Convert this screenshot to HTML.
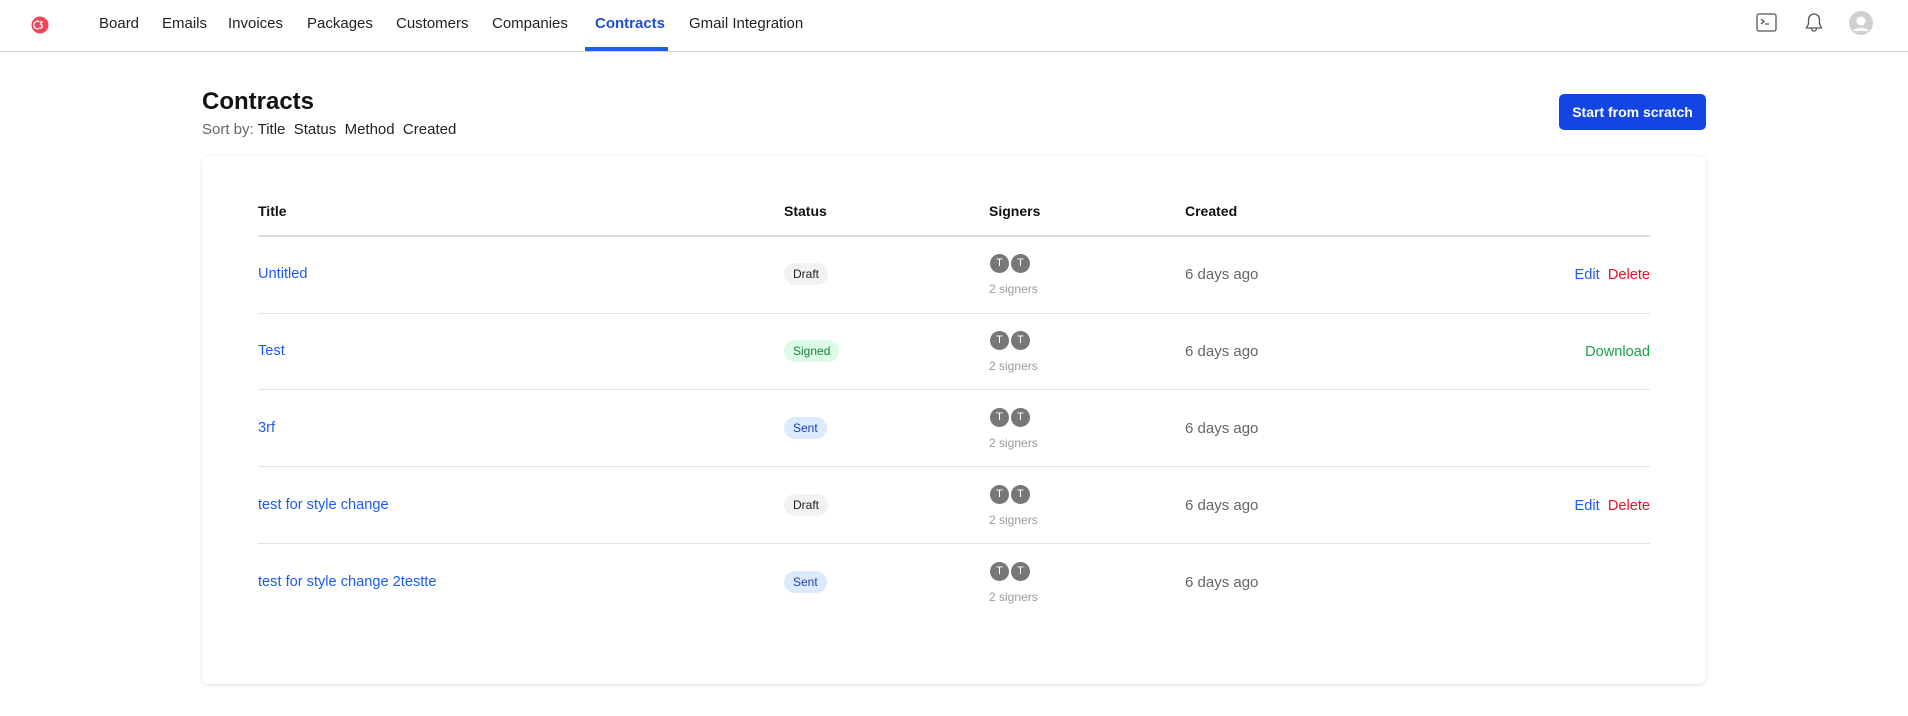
<!DOCTYPE html>
<html><head><meta charset="utf-8"><style>
*{box-sizing:border-box;margin:0;padding:0}
body{width:1908px;height:716px;background:#fff;font-family:"Liberation Sans",sans-serif;color:#111;position:relative;overflow:hidden}
.abs{position:absolute;white-space:nowrap}
.nav{position:absolute;left:0;top:0;width:1908px;height:52px;border-bottom:1px solid #d4d4d4}
.ni{position:absolute;top:15px;font-size:15px;color:#222}
.act{color:#1d4ed8;font-weight:bold}
.ul{position:absolute;left:585px;top:47px;width:83px;height:4px;background:#1d5cf0}
.card{position:absolute;left:202px;top:156px;width:1504px;height:528px;border-radius:6px;box-shadow:0 1px 3px rgba(0,0,0,.12),0 0 1px rgba(0,0,0,.08)}
.th{position:absolute;top:203px;font-size:14px;font-weight:bold;color:#111}
.line{position:absolute;left:258px;width:1392px;height:1px;background:#e3e3e3}
.t{position:absolute;font-size:14.6px;color:#1d5cf0}
.b{position:absolute;left:784px;height:22px;line-height:22px;padding:0 9px;border-radius:11px;font-size:12px}
.av{position:absolute;width:19px;height:19px;border-radius:50%;background:#777;color:#fff;font-size:11px;text-align:center;line-height:19px}
.sg{position:absolute;left:989px;font-size:12px;color:#999}
.c{position:absolute;left:1185px;font-size:15px;color:#666}
.a{position:absolute;font-size:14.6px}
</style></head><body>
<div class="nav">
<svg class="abs" style="left:31px;top:16px" width="18" height="18" viewBox="0 0 18 18"><circle cx="9" cy="9" r="8.5" fill="#f0455a"/><path d="M8 5.5a3.8 3.8 0 1 0 0 7" stroke="#fff" stroke-width="1.3" fill="none"/><path d="M8.5 6h2.5l-1.5 2.3a1.9 1.9 0 1 1-1.3 3.4" stroke="#fff" stroke-width="1.3" fill="none"/></svg>
<span class="ni" style="left:99px">Board</span>
<span class="ni" style="left:162px">Emails</span>
<span class="ni" style="left:228px">Invoices</span>
<span class="ni" style="left:307px">Packages</span>
<span class="ni" style="left:396px">Customers</span>
<span class="ni" style="left:492px">Companies</span>
<span class="ni act" style="left:595px">Contracts</span>
<span class="ni" style="left:689px">Gmail Integration</span>
<div class="ul"></div>
<svg class="abs" style="left:1756px;top:13px" width="21" height="20" viewBox="0 0 21 20"><rect x="1" y="1" width="19" height="17" rx="2" fill="none" stroke="#555" stroke-width="1.3"/><path d="M5 6l3 2.5-3 2.5M9 11h4" stroke="#555" stroke-width="1.3" fill="none"/></svg>
<svg class="abs" style="left:1804px;top:12px" width="20" height="22" viewBox="0 0 20 22"><path d="M10 2a5.5 5.5 0 0 0-5.5 5.5v4.5L2.5 16h15l-2-4V7.5A5.5 5.5 0 0 0 10 2zM7.5 16.5a2.5 2.5 0 0 0 5 0" fill="none" stroke="#555" stroke-width="1.3"/></svg>
<svg class="abs" style="left:1849px;top:11px" width="24" height="24" viewBox="0 0 24 24"><circle cx="12" cy="12" r="12" fill="#d0d0d0"/><circle cx="12" cy="10" r="4.5" fill="#fff"/><path d="M4 20a9 6 0 0 1 16 0z" fill="#fff"/></svg>
</div>
<div class="abs" style="left:202px;top:88px;font-size:24px;font-weight:bold">Contracts</div>
<div class="abs" style="left:202px;top:121px;font-size:15px;color:#666">Sort by: <span style="color:#222">Title&nbsp; Status&nbsp; Method&nbsp; Created</span></div>
<div class="abs" style="left:1559px;top:94px;width:147px;height:36px;background:#1444e4;border-radius:5px;color:#fff;font-size:14px;font-weight:bold;text-align:center;line-height:36px">Start from scratch</div>
<div class="card"></div>
<div class="th" style="left:258px">Title</div>
<div class="th" style="left:784px">Status</div>
<div class="th" style="left:989px">Signers</div>
<div class="th" style="left:1185px">Created</div>
<div class="line" style="top:235px;height:2px;background:#ddd"></div>
<div class="line" style="top:313px"></div>
<div class="line" style="top:389px"></div>
<div class="line" style="top:466px"></div>
<div class="line" style="top:543px"></div>

<div class="t" style="left:258px;top:266px">Untitled</div>
<div class="b" style="top:263px;background:#f2f2f2;color:#222">Draft</div>
<div class="av" style="left:990px;top:254px">T</div><div class="av" style="left:1011px;top:254px">T</div>
<div class="sg" style="top:282px">2 signers</div>
<div class="c" style="top:266px">6 days ago</div>
<div class="a" style="right:258px;top:267px;color:#1d5cf0">Edit&nbsp; <span style="color:#e5112a">Delete</span></div>

<div class="t" style="left:258px;top:343px">Test</div>
<div class="b" style="top:340px;background:#dcfce7;color:#15803d">Signed</div>
<div class="av" style="left:990px;top:331px">T</div><div class="av" style="left:1011px;top:331px">T</div>
<div class="sg" style="top:359px">2 signers</div>
<div class="c" style="top:343px">6 days ago</div>
<div class="a" style="right:258px;top:344px;color:#16a34a">Download</div>

<div class="t" style="left:258px;top:420px">3rf</div>
<div class="b" style="top:417px;background:#dbeafe;color:#1e40af">Sent</div>
<div class="av" style="left:990px;top:408px">T</div><div class="av" style="left:1011px;top:408px">T</div>
<div class="sg" style="top:436px">2 signers</div>
<div class="c" style="top:420px">6 days ago</div>

<div class="t" style="left:258px;top:497px">test for style change</div>
<div class="b" style="top:494px;background:#f2f2f2;color:#222">Draft</div>
<div class="av" style="left:990px;top:485px">T</div><div class="av" style="left:1011px;top:485px">T</div>
<div class="sg" style="top:513px">2 signers</div>
<div class="c" style="top:497px">6 days ago</div>
<div class="a" style="right:258px;top:498px;color:#1d5cf0">Edit&nbsp; <span style="color:#e5112a">Delete</span></div>

<div class="t" style="left:258px;top:574px">test for style change 2testte</div>
<div class="b" style="top:571px;background:#dbeafe;color:#1e40af">Sent</div>
<div class="av" style="left:990px;top:562px">T</div><div class="av" style="left:1011px;top:562px">T</div>
<div class="sg" style="top:590px">2 signers</div>
<div class="c" style="top:574px">6 days ago</div>
</body></html>
